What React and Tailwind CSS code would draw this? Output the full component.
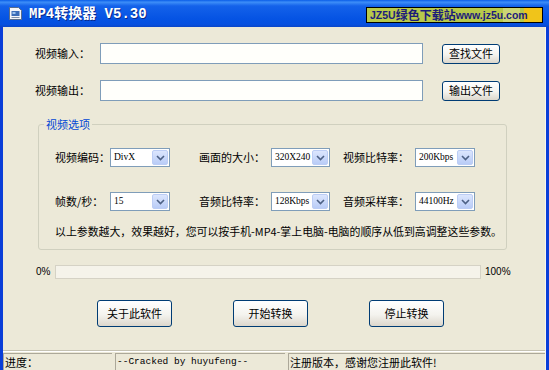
import React from 'react';

const Select = ({ value, w }) => (
  <div className={`flex h-[19px] items-center border border-[#7F9DB9] bg-white ${w}`}>
    <span className="flex-1 overflow-hidden whitespace-nowrap pl-[3px] font-['Liberation_Serif',serif] text-[9.5px] leading-none text-black">{value}</span>
    <span className="mr-px flex h-[15px] w-[16px] shrink-0 items-center justify-center rounded-[2px] border border-[#BCCDF5] bg-[linear-gradient(#DCE6FD,#B9CCF7)]">
      <svg width="9" height="6" viewBox="0 0 9 6">
        <path d="M1 1l3.5 3.5L8 1" fill="none" stroke="#4D6185" strokeWidth="1.6" />
      </svg>
    </span>
  </div>
);

const XpButton = ({ children, className }) => (
  <button className={`flex items-center justify-center rounded-[3px] border border-[#003C74] bg-[linear-gradient(#FFFFFF,#F4F3EE_55%,#DCD7CC)] text-[11px] leading-none text-black ${className}`}>
    {children}
  </button>
);

const TitleBar = () => (
  <div className="relative flex h-[27px] shrink-0 items-center bg-[linear-gradient(180deg,#0A5DE8_0%,#3D8EF8_8%,#1462EA_22%,#0553E3_70%,#0650E0_90%,#0A46C8_100%)] pl-[8px]">
    <svg width="15" height="15" viewBox="0 0 15 15">
      <path d="M1.5 1.5h9l3 3v9h-12z" fill="#F4F6FA" stroke="#5A6E8C" />
      <rect x="3.5" y="5" width="8" height="5" fill="#3C6DB8" />
      <rect x="4.5" y="6" width="3" height="2" fill="#9CC3EE" />
      <path d="M3.5 11.5h8" stroke="#7D8FA8" />
    </svg>
    <span className="ml-[6px] font-['Liberation_Mono','Noto_Sans_CJK_SC',monospace] text-[14px] font-bold leading-none text-white [text-shadow:1px_1px_0_#0A2A8A]">
      MP4转换器 V5.30
    </span>
    <div className="absolute left-[366px] top-[7px] flex h-[16px] w-[177px] items-center whitespace-nowrap border border-black bg-[#B8C94A] pl-[3px]">
      <span className="absolute left-[136px] top-0 h-full w-[17px] bg-[#CCD576]" />
      <span className="absolute left-[157px] top-0 h-full w-[18px] bg-[#F0C41A]" />
      <span className="relative font-['Liberation_Sans',sans-serif] text-[10.5px] font-bold leading-[14px] text-[#1C1C7A]">JZ5U</span>
      <span className="relative font-['Noto_Sans_CJK_SC',sans-serif] text-[12px] font-bold leading-[14px] text-[#1C1C7A]">绿色下载站</span>
      <span className="relative font-['Liberation_Sans',sans-serif] text-[10.5px] font-bold leading-[14px] text-[#1C1C7A]">www.jz5u.com</span>
    </div>
  </div>
);

const Panel = ({ children, className }) => (
  <div className={`flex h-[17px] items-center border-t border-l border-[#ACA899] border-b-white border-r-white pl-[1px] ${className}`}>
    {children}
  </div>
);

export default function App() {
  return (
    <div className="flex h-[370px] w-[549px] flex-col overflow-hidden bg-[#ECE9D8] font-['Noto_Sans_CJK_SC',sans-serif] text-[11px] text-black">
      <TitleBar />
      <div className="flex flex-1 border-l-[3px] border-r-[3px] border-[#0A3ED8]">
        <div className="flex flex-1 flex-col border-r border-[#F8F6EE]">
          <div className="pl-[32px] pt-[16px]">
            <div className="flex items-center">
              <span className="w-[65px] leading-none">视频输入：</span>
              <div className="h-[21px] w-[323px] border border-[#7F9DB9] bg-[#FFFFFB]" />
              <XpButton className="ml-[19px] h-[20px] w-[58px]">查找文件</XpButton>
            </div>
            <div className="mt-[16px] flex items-center">
              <span className="w-[65px] leading-none">视频输出：</span>
              <div className="h-[21px] w-[323px] border border-[#7F9DB9] bg-[#FFFFFB]" />
              <XpButton className="ml-[19px] h-[20px] w-[58px]">输出文件</XpButton>
            </div>

            <fieldset className="ml-[3px] mt-[16px] w-[469px] rounded-[3px] border border-[#D0D0BF]">
              <legend className="ml-[5px] px-[2px] text-[11px] leading-[14px] text-[#0046D5]">视频选项</legend>
              <div className="pb-[11px] pl-[16px]">
                <div className="mt-[17px] flex items-center">
                  <span className="w-[55px] leading-none">视频编码：</span>
                  <Select value="DivX" w="w-[60px]" />
                  <span className="ml-[29px] w-[72px] leading-none">画面的大小：</span>
                  <Select value="320X240" w="w-[59px]" />
                  <span className="ml-[13px] w-[72px] leading-none">视频比特率：</span>
                  <Select value="200Kbps" w="w-[60px]" />
                </div>
                <div className="mt-[25px] flex items-center">
                  <span className="w-[55px] leading-none">帧数/秒：</span>
                  <Select value="15" w="w-[60px]" />
                  <span className="ml-[29px] w-[72px] leading-none">音频比特率：</span>
                  <Select value="128Kbps" w="w-[59px]" />
                  <span className="ml-[13px] w-[72px] leading-none">音频采样率：</span>
                  <Select value="44100Hz" w="w-[60px]" />
                </div>
                <p className="mt-[13px] whitespace-nowrap text-[10.9px] leading-[14px]">
                  以上参数越大，效果越好，您可以按手机-MP4-掌上电脑-电脑的顺序从低到高调整这些参数。
                </p>
              </div>
            </fieldset>

            <div className="mt-[15px] flex items-center">
              <span className="ml-px w-[19px] font-['Liberation_Sans',sans-serif] text-[10px] leading-none">0%</span>
              <div className="h-[14px] w-[426px] border border-[#D5D2C5] bg-[#F5F3EA]" />
              <span className="ml-[4px] font-['Liberation_Sans',sans-serif] text-[10px] leading-none">100%</span>
            </div>

            <div className="ml-[62px] mt-[21px] flex gap-[61px]">
              <XpButton className="h-[27px] w-[75px]">关于此软件</XpButton>
              <XpButton className="h-[27px] w-[75px]">开始转换</XpButton>
              <XpButton className="h-[27px] w-[75px]">停止转换</XpButton>
            </div>
          </div>

          <div className="mt-auto border-t border-[#C5C2B2]">
            <div className="flex gap-[3px] border-t border-white pt-px">
              <Panel className="w-[109px]">进度：</Panel>
              <Panel className="w-[170px]">
                <span className="font-['Liberation_Mono',monospace] text-[9.5px] leading-none">--Cracked by huyufeng--</span>
              </Panel>
              <Panel className="flex-1">注册版本，感谢您注册此软件!</Panel>
            </div>
          </div>
        </div>
      </div>
    </div>
  );
}
